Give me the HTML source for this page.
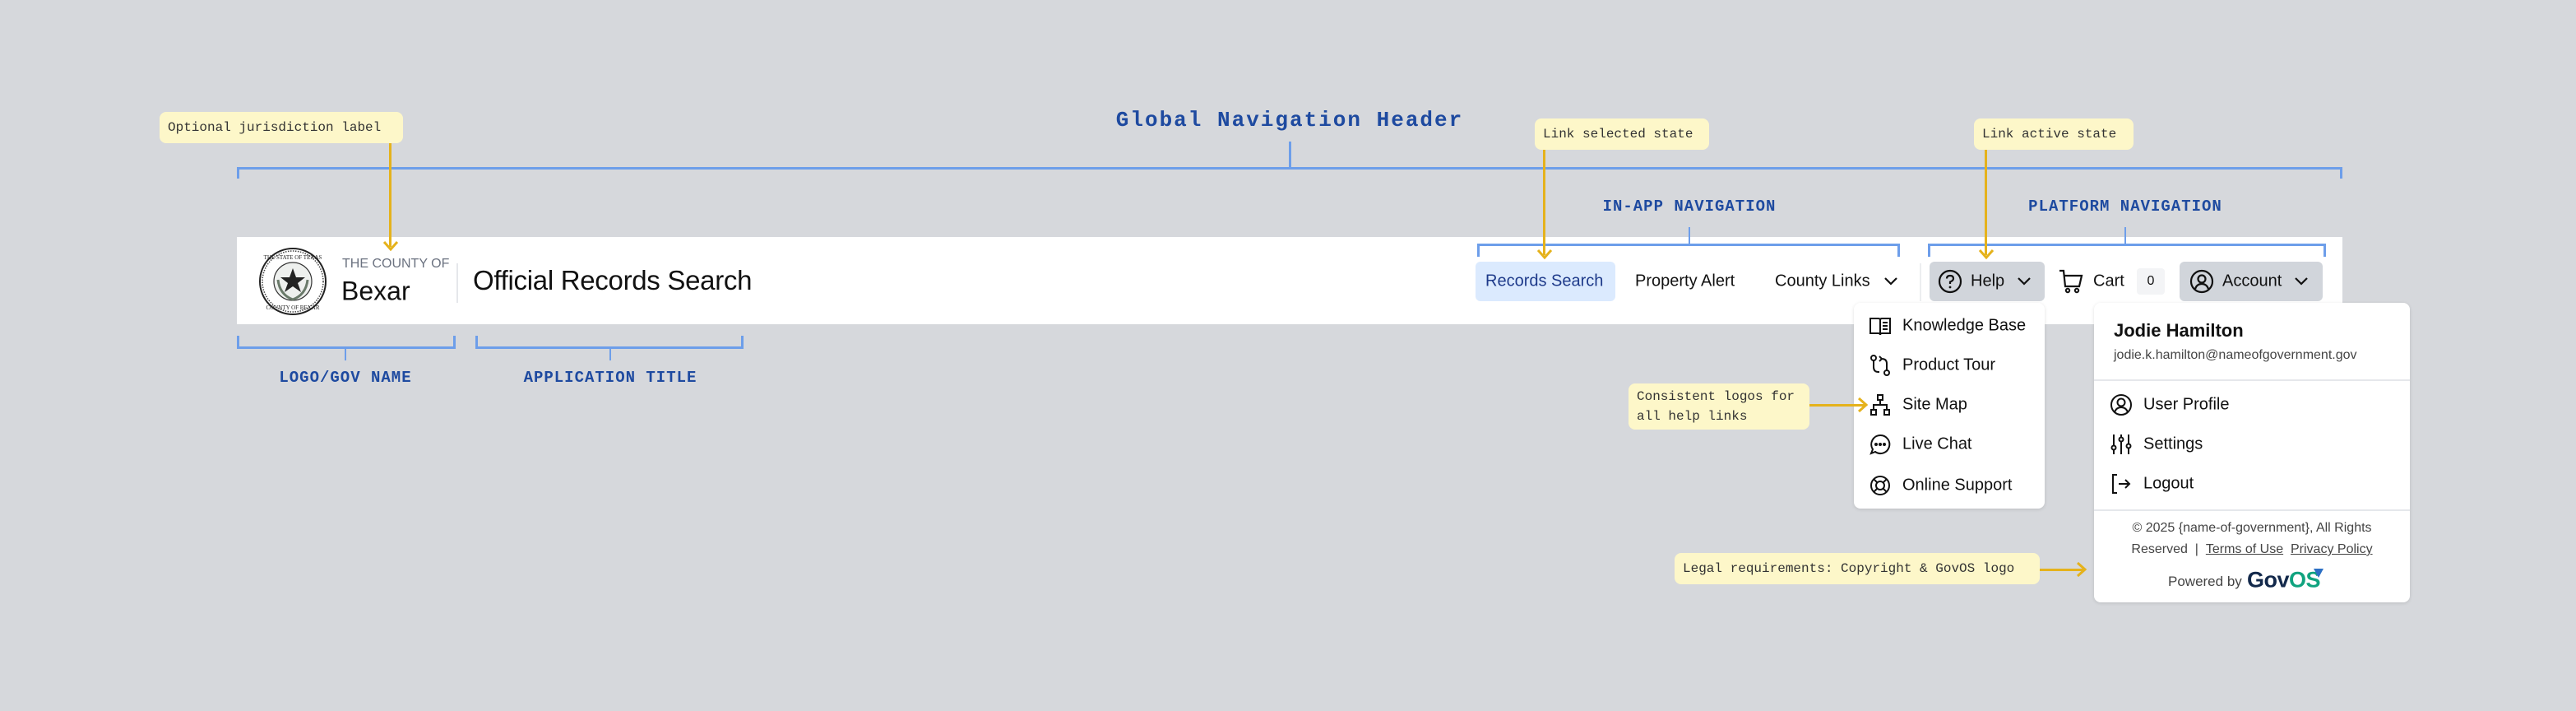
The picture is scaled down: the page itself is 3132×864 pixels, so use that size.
<!DOCTYPE html>
<html><head><meta charset="utf-8"><style>
*{margin:0;padding:0;box-sizing:border-box}
body{width:3132px;height:864px;background:#d6d8dc;position:relative;overflow:hidden;font-family:"Liberation Sans",sans-serif;color:#111}
.a{position:absolute}
.note{position:absolute;background:#fdf7c9;border-radius:8px;font-family:"Liberation Mono",monospace;font-size:16px;color:#333;padding:0 10px;display:flex;align-items:center;white-space:nowrap;z-index:5}
.lbl{position:absolute;font-family:"Liberation Mono",monospace;font-weight:bold;color:#1e4aa0;font-size:19px;letter-spacing:1px;transform:translateX(-50%);white-space:nowrap}
.bl{position:absolute;background:#6d9eea;z-index:3}
.ar{position:absolute;background:#e5b21c;z-index:6}
svg.arh{position:absolute;z-index:6}
.t{position:absolute;white-space:nowrap;transform:translateY(-50%)}
.item{position:absolute;font-size:20px;white-space:nowrap;transform:translateY(-50%);color:#111}
svg.ic{position:absolute;transform:translateY(-50%)}
</style></head><body>

<div class="lbl" style="left:1568px;top:131px;font-size:26px;letter-spacing:2px">Global Navigation Header</div>
<div class="bl" style="left:288px;top:203px;width:2560px;height:3px"></div>
<div class="bl" style="left:288px;top:203px;width:3px;height:14px"></div>
<div class="bl" style="left:2845px;top:203px;width:3px;height:14px"></div>
<div class="bl" style="left:1567px;top:172px;width:3px;height:32px"></div>

<!-- header -->
<div class="a" style="left:288px;top:288px;width:2560px;height:106px;background:#fff"></div>

<div class="note" style="left:194px;top:136px;width:296px;height:38px">Optional jurisdiction label</div>
<div class="ar" style="left:473px;top:174px;width:3px;height:126px"></div>
<svg class="arh" style="left:465px;top:292px" width="20" height="14"><path d="M2 2 L10 11 L18 2" stroke="#e5b21c" stroke-width="3" fill="none"/></svg>

<div class="note" style="left:1866px;top:144px;width:212px;height:38px">Link selected state</div>
<div class="ar" style="left:1876px;top:182px;width:3px;height:128px"></div>
<svg class="arh" style="left:1868px;top:302px" width="20" height="14"><path d="M2 2 L10 11 L18 2" stroke="#e5b21c" stroke-width="3" fill="none"/></svg>

<div class="note" style="left:2400px;top:144px;width:194px;height:38px">Link active state</div>
<div class="ar" style="left:2413px;top:182px;width:3px;height:128px"></div>
<svg class="arh" style="left:2405px;top:302px" width="20" height="14"><path d="M2 2 L10 11 L18 2" stroke="#e5b21c" stroke-width="3" fill="none"/></svg>

<div class="lbl" style="left:2054px;top:240px">IN-APP NAVIGATION</div>
<div class="bl" style="left:2053px;top:276px;width:2px;height:22px"></div>
<div class="bl" style="left:1796px;top:296px;width:514px;height:3px"></div>
<div class="bl" style="left:1796px;top:296px;width:3px;height:16px"></div>
<div class="bl" style="left:2307px;top:296px;width:3px;height:16px"></div>
<div class="lbl" style="left:2584px;top:240px">PLATFORM NAVIGATION</div>
<div class="bl" style="left:2583px;top:276px;width:2px;height:22px"></div>
<div class="bl" style="left:2344px;top:296px;width:484px;height:3px"></div>
<div class="bl" style="left:2344px;top:296px;width:3px;height:16px"></div>
<div class="bl" style="left:2825px;top:296px;width:3px;height:16px"></div>

<svg class="a" style="left:314px;top:300px" width="84" height="84" viewBox="0 0 84 84">
<circle cx="42" cy="42" r="40" fill="#fff" stroke="#222" stroke-width="2"/>
<circle cx="42" cy="42" r="37" fill="none" stroke="#444" stroke-width="1.5" stroke-dasharray="1.5 1.5"/>
<circle cx="42" cy="42" r="23" fill="#eef0ee" stroke="#333" stroke-width="1.2"/>
<path d="M42 26 L46 37 L57 37 L48 44 L52 55 L42 48 L32 55 L36 44 L27 37 L38 37Z" fill="#222"/>
<path d="M24 40 Q26 58 42 64 Q58 58 60 40" stroke="#6a7a6a" stroke-width="3" fill="none"/>
<text x="42" y="15" font-size="7" text-anchor="middle" font-family="Liberation Serif" fill="#222">THE STATE OF TEXAS</text>
<text x="42" y="76" font-size="7" text-anchor="middle" font-family="Liberation Serif" fill="#222">COUNTY OF BEXAR</text>
</svg>
<div class="t" style="left:416px;top:321px;font-size:16px;color:#6b7280">THE COUNTY OF</div>
<div class="t" style="left:415px;top:354px;font-size:32px;color:#111">Bexar</div>
<div class="a" style="left:555px;top:320px;width:2px;height:48px;background:#e5e7eb"></div>
<div class="t" style="left:575px;top:341px;font-size:33px;font-weight:500;color:#111;letter-spacing:-0.3px">Official Records Search</div>

<div class="a" style="left:1794px;top:318px;width:170px;height:48px;background:#dbeafe;border-radius:6px"></div>
<div class="t" style="left:1806px;top:342px;font-size:20px;color:#1e3a8a">Records Search</div>
<div class="t" style="left:1988px;top:342px;font-size:20px">Property Alert</div>
<div class="t" style="left:2158px;top:342px;font-size:20px">County Links</div>
<svg class="ic" style="left:2289px;top:342px" width="20" height="14"><path d="M3 3 L10 10 L17 3" stroke="#111" stroke-width="2.2" fill="none"/></svg>
<div class="a" style="left:2334px;top:320px;width:2px;height:46px;background:#eceef0"></div>

<div class="a" style="left:2346px;top:318px;width:140px;height:48px;background:#d1d5db;border-radius:6px"></div>
<svg class="ic" style="left:2356px;top:342px" width="30" height="30" viewBox="0 0 30 30"><circle cx="15" cy="15" r="13" stroke="#111" stroke-width="2.2" fill="none"/><path d="M11 11.5 Q11 8 15 8 Q19 8 19 11.5 Q19 14 15 15.5 V18" stroke="#111" stroke-width="2.2" fill="none"/><circle cx="15" cy="22" r="1.4" fill="#111"/></svg>
<div class="t" style="left:2396px;top:342px;font-size:20px">Help</div>
<svg class="ic" style="left:2451px;top:342px" width="20" height="14"><path d="M3 3 L10 10 L17 3" stroke="#111" stroke-width="2.2" fill="none"/></svg>
<svg class="ic" style="left:2502px;top:342px" width="32" height="32" viewBox="0 0 32 32"><path d="M2 3 H7 L9 22 H26 L29 9 H8" stroke="#111" stroke-width="2.2" fill="none"/><circle cx="12" cy="27" r="2.2" stroke="#111" stroke-width="2" fill="none"/><circle cx="23" cy="27" r="2.2" stroke="#111" stroke-width="2" fill="none"/></svg>
<div class="t" style="left:2545px;top:342px;font-size:20px">Cart</div>
<div class="a" style="left:2598px;top:326px;width:34px;height:32px;background:#f3f4f6;border-radius:4px;font-size:16px;text-align:center;line-height:32px">0</div>
<div class="a" style="left:2650px;top:318px;width:174px;height:48px;background:#d1d5db;border-radius:6px"></div>
<svg class="ic" style="left:2662px;top:342px" width="30" height="30" viewBox="0 0 30 30"><circle cx="15" cy="15" r="13" stroke="#111" stroke-width="2.2" fill="none"/><circle cx="15" cy="12" r="4.5" stroke="#111" stroke-width="2.2" fill="none"/><path d="M7 24 Q9 18 15 18 Q21 18 23 24" stroke="#111" stroke-width="2.2" fill="none"/></svg>
<div class="t" style="left:2702px;top:342px;font-size:20px">Account</div>
<svg class="ic" style="left:2788px;top:342px" width="20" height="14"><path d="M3 3 L10 10 L17 3" stroke="#111" stroke-width="2.2" fill="none"/></svg>

<div class="bl" style="left:288px;top:421px;width:266px;height:3px"></div>
<div class="bl" style="left:288px;top:408px;width:3px;height:16px"></div>
<div class="bl" style="left:551px;top:408px;width:3px;height:16px"></div>
<div class="bl" style="left:419px;top:424px;width:2px;height:14px"></div>
<div class="lbl" style="left:420px;top:448px">LOGO/GOV NAME</div>
<div class="bl" style="left:578px;top:421px;width:326px;height:3px"></div>
<div class="bl" style="left:578px;top:408px;width:3px;height:16px"></div>
<div class="bl" style="left:901px;top:408px;width:3px;height:16px"></div>
<div class="bl" style="left:741px;top:424px;width:2px;height:14px"></div>
<div class="lbl" style="left:742px;top:448px">APPLICATION TITLE</div>

<div class="a" style="left:2254px;top:368px;width:232px;height:250px;background:#fff;border-radius:8px;box-shadow:0 1px 4px rgba(0,0,0,.12)"></div>
<svg class="ic" style="left:2272px;top:396px" width="28" height="28" viewBox="0 0 28 28" fill="none" stroke="#111" stroke-width="2"><path d="M2 5 H12 Q14 5 14 7 V25 Q14 23 12 23 H2Z M26 5 H16 Q14 5 14 7 V25 Q14 23 16 23 H26Z M17 10 H23 M17 14 H23 M17 18 H23"/></svg>
<div class="item" style="left:2313px;top:396px">Knowledge Base</div>
<svg class="ic" style="left:2272px;top:444px" width="28" height="28" viewBox="0 0 28 28" fill="none" stroke="#111" stroke-width="2"><circle cx="6" cy="5" r="3"/><circle cx="22" cy="23" r="3"/><path d="M6 8 V16 Q6 22 12 22 H13 M22 20 V12 Q22 6 16 6 H15 M13 3 L16 6 L13 9"/></svg>
<div class="item" style="left:2313px;top:444px">Product Tour</div>
<svg class="ic" style="left:2272px;top:492px" width="28" height="28" viewBox="0 0 28 28" fill="none" stroke="#111" stroke-width="2"><rect x="11" y="2" width="6" height="6"/><rect x="3" y="20" width="6" height="6"/><rect x="19" y="20" width="6" height="6"/><path d="M14 8 V14 M6 20 V14 H22 V20"/></svg>
<div class="item" style="left:2313px;top:492px">Site Map</div>
<svg class="ic" style="left:2272px;top:540px" width="28" height="28" viewBox="0 0 28 28" fill="none" stroke="#111" stroke-width="2"><path d="M14 3 A11 11 0 1 1 8 23 L3 25 L5 20 A11 11 0 0 1 14 3Z"/><circle cx="9" cy="14" r="1" fill="#111"/><circle cx="14" cy="14" r="1" fill="#111"/><circle cx="19" cy="14" r="1" fill="#111"/></svg>
<div class="item" style="left:2313px;top:540px">Live Chat</div>
<svg class="ic" style="left:2272px;top:590px" width="28" height="28" viewBox="0 0 28 28" fill="none" stroke="#111" stroke-width="2"><circle cx="14" cy="14" r="11"/><circle cx="14" cy="14" r="5"/><path d="M6 6 L10 10 M22 6 L18 10 M6 22 L10 18 M22 22 L18 18"/></svg>
<div class="item" style="left:2313px;top:590px">Online Support</div>

<div class="note" style="left:1980px;top:466px;width:220px;height:56px;line-height:24px">Consistent logos for<br>all help links</div>
<div class="ar" style="left:2200px;top:491px;width:68px;height:3px"></div>
<svg class="arh" style="left:2258px;top:482px" width="14" height="20"><path d="M2 2 L11 10 L2 18" stroke="#e5b21c" stroke-width="3" fill="none"/></svg>

<div class="a" style="left:2546px;top:368px;width:384px;height:364px;background:#fff;border-radius:8px;box-shadow:0 1px 4px rgba(0,0,0,.12)"></div>
<div class="t" style="left:2570px;top:402px;font-size:22px;font-weight:bold">Jodie Hamilton</div>
<div class="t" style="left:2570px;top:432px;font-size:16px;color:#444">jodie.k.hamilton@nameofgovernment.gov</div>
<div class="a" style="left:2546px;top:461px;width:384px;height:2px;background:#e5e7eb"></div>
<svg class="ic" style="left:2565px;top:492px" width="28" height="28" viewBox="0 0 28 28" fill="none" stroke="#111" stroke-width="2"><circle cx="14" cy="14" r="12"/><circle cx="14" cy="11" r="4.5"/><path d="M6 23 Q8 17 14 17 Q20 17 22 23"/></svg>
<div class="item" style="left:2606px;top:492px">User Profile</div>
<svg class="ic" style="left:2565px;top:540px" width="28" height="28" viewBox="0 0 28 28" fill="none" stroke="#111" stroke-width="2"><path d="M5 2 V26 M14 2 V26 M23 2 V26"/><circle cx="5" cy="18" r="2.5" fill="#fff"/><circle cx="14" cy="8" r="2.5" fill="#fff"/><circle cx="23" cy="16" r="2.5" fill="#fff"/></svg>
<div class="item" style="left:2606px;top:540px">Settings</div>
<svg class="ic" style="left:2565px;top:588px" width="28" height="28" viewBox="0 0 28 28" fill="none" stroke="#111" stroke-width="2"><path d="M9 3 H4 V25 H9 M11 14 H24 M19 9 L24 14 L19 19"/></svg>
<div class="item" style="left:2606px;top:588px">Logout</div>
<div class="a" style="left:2546px;top:619px;width:384px;height:2px;background:#e5e7eb"></div>
<div class="t" style="left:2738px;top:642px;font-size:16px;color:#444;transform:translate(-50%,-50%)">© 2025 {name-of-government}, All Rights</div>
<div class="t" style="left:2738px;top:668px;font-size:16px;color:#444;transform:translate(-50%,-50%)">Reserved &nbsp;| &nbsp;<u>Terms of Use</u> &nbsp;<u>Privacy Policy</u></div>
<div class="t" style="left:2636px;top:707px;font-size:17px;color:#444">Powered by</div>
<div class="t" style="left:2732px;top:705px;font-size:27px;font-weight:bold;letter-spacing:-0.5px"><span style="color:#13294b">Gov</span><span style="color:#10a37f">OS</span></div>
<svg class="a" style="left:2812px;top:690px" width="14" height="14"><path d="M1 1 H13 L7 12Z" fill="#2b6fc4"/></svg>

<div class="note" style="left:2036px;top:672px;width:444px;height:38px">Legal requirements: Copyright &amp; GovOS logo</div>
<div class="ar" style="left:2480px;top:691px;width:54px;height:3px"></div>
<svg class="arh" style="left:2524px;top:682px" width="14" height="20"><path d="M2 2 L11 10 L2 18" stroke="#e5b21c" stroke-width="3" fill="none"/></svg>

</body></html>
